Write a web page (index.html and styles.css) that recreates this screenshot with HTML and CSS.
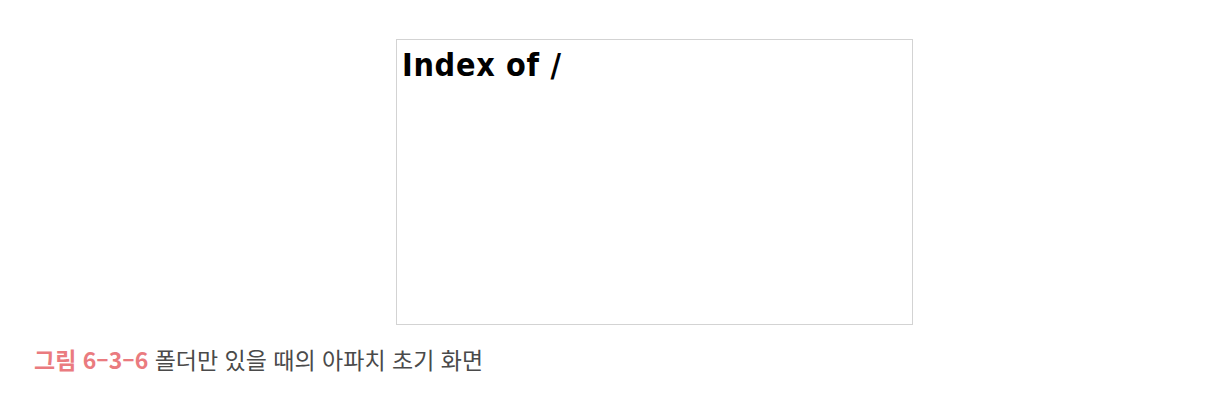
FILE: index.html
```html
<!DOCTYPE html>
<html lang="ko">
<head>
<meta charset="utf-8">
<link rel="stylesheet" href="styles.css">
</head>
<body>
<div class="page">
  <div class="figure">
    <div class="shot">
      <h1 class="title">Index of /</h1>
    </div>
  </div>
  <p class="caption"><span class="label">그림 6–3–6</span> 폴더만 있을 때의 아파치 초기 화면</p>
</div>
</body>
</html>
```
FILE: styles.css
```css
html, body {
  margin: 0;
  padding: 0;
  background: #ffffff;
}
.page {
  width: 1211px;
  height: 412px;
  padding-top: 39px;
  box-sizing: border-box;
}
.figure {
  display: flex;
  padding-left: 396px;
}
.shot {
  width: 517px;
  height: 286px;
  box-sizing: border-box;
  border: 1px solid #d3d3d3;
  background: #fff;
  padding: 6px 5px;
}
.title {
  margin: 0;
  font-family: "DejaVu Sans Condensed", "DejaVu Sans", Verdana, sans-serif;
  font-stretch: condensed;
  font-weight: bold;
  font-size: 32px;
  line-height: 38px;
  letter-spacing: 0.7px;
  color: #000;
}
.caption {
  margin: 19px 0 0 34px;
  font-family: "Noto Sans CJK KR", "Noto Sans", sans-serif;
  font-size: 23px;
  line-height: 30px;
  color: #4a4a4a;
}
.label {
  color: #ea7b7f;
  font-weight: bold;
}
```
